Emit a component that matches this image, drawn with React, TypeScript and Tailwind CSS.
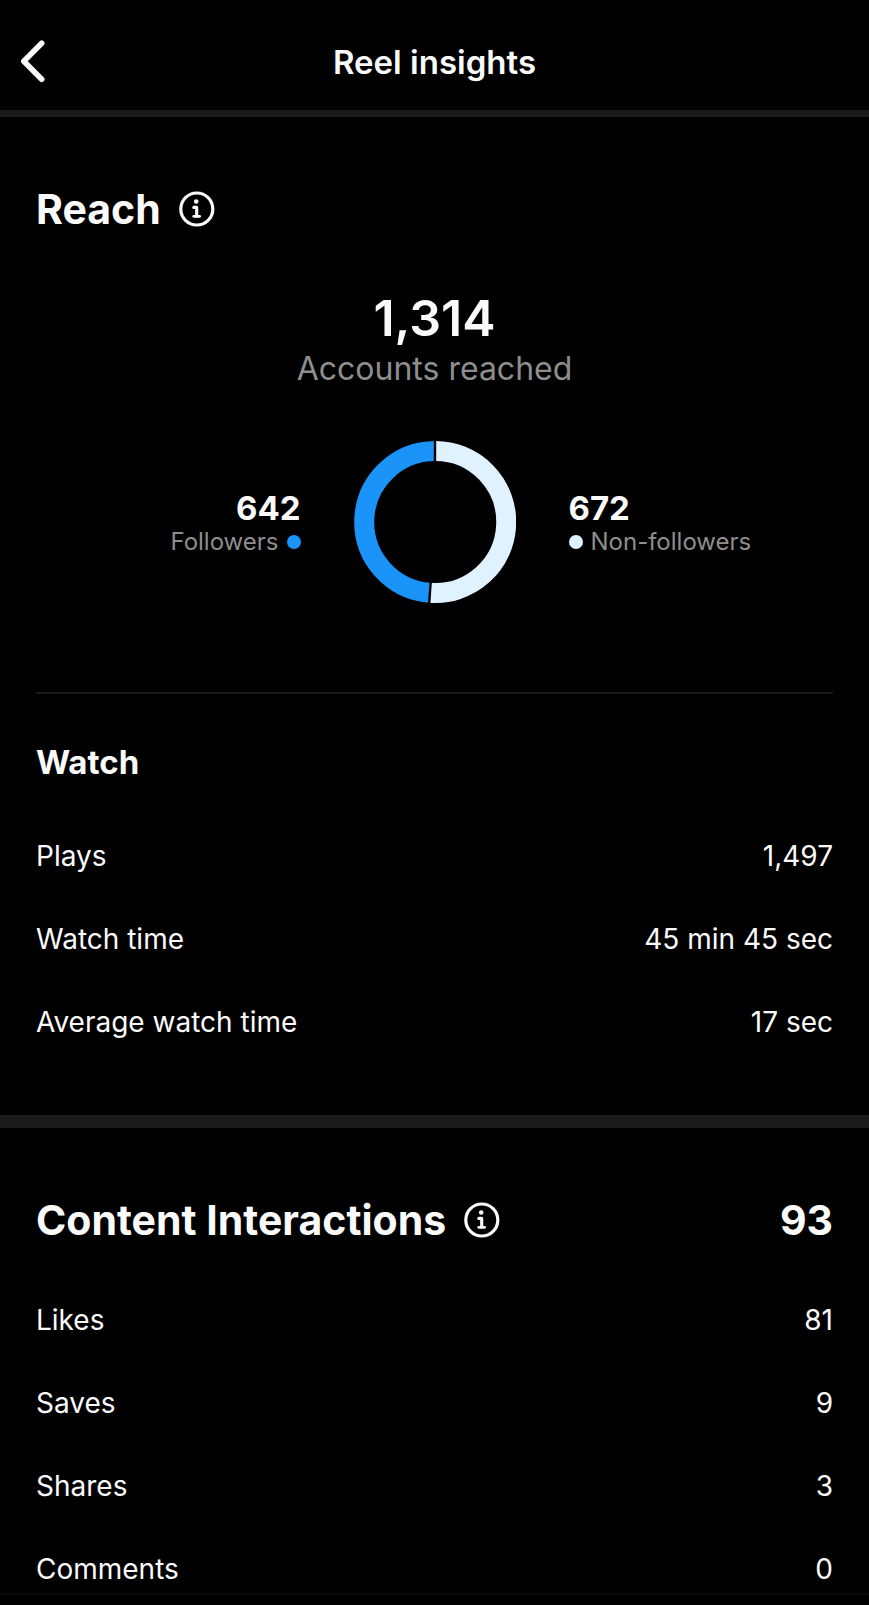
import React from "react";

type Metric = { label: string; value: string };

const watchMetrics: Metric[] = [
  { label: "Plays", value: "1,497" },
  { label: "Watch time", value: "45 min 45 sec" },
  { label: "Average watch time", value: "17 sec" },
];

const interactionMetrics: Metric[] = [
  { label: "Likes", value: "81" },
  { label: "Saves", value: "9" },
  { label: "Shares", value: "3" },
  { label: "Comments", value: "0" },
];

function InfoButton({ label }: { label: string }) {
  return (
    <button type="button" aria-label={label} className="shrink-0">
      <svg viewBox="0 0 36 36" className="size-9" fill="none" stroke="currentColor">
        <circle cx="17.8" cy="18" r="16" strokeWidth="3.2" />
        <circle cx="17.2" cy="10.5" r="2.3" fill="currentColor" stroke="none" />
        <path d="M14.8 16.4h2.9v8.6" strokeWidth="3.1" strokeLinecap="round" strokeLinejoin="round" />
        <path d="M14.8 25.3h5.8" strokeWidth="2.8" strokeLinecap="round" />
      </svg>
    </button>
  );
}

function MetricList({ items }: { items: Metric[] }) {
  return (
    <dl className="flex flex-col gap-[47px] text-[28px] leading-9">
      {items.map((item) => (
        <div key={item.label} className="flex justify-between">
          <dt>{item.label}</dt>
          <dd>{item.value}</dd>
        </div>
      ))}
    </dl>
  );
}

function ReachDonut() {
  return (
    <svg viewBox="-81 -81 162 162" className="size-[162px] shrink-0" fill="none" role="img" aria-label="642 followers, 672 non-followers">
      <path d="M0 -71A71 71 0 1 1 -5.1 70.8" stroke="#e0f1ff" strokeWidth="20" />
      <path d="M-5.1 70.8A71 71 0 0 1 0 -71" stroke="#1a94f8" strokeWidth="20" />
      <path d="M0 -81V-60M-4.3 59.8L-5.8 81" stroke="#000" strokeWidth="2.4" />
    </svg>
  );
}

export default function App() {
  return (
    <div className="min-h-screen bg-black font-['Inter',sans-serif] text-[#fafafa]">
      <header className="grid grid-cols-[1fr_auto_1fr] items-center border-b-[7px] border-[#1a1a1a] pt-[37px] pb-[23px]">
        <button type="button" aria-label="Back" className="ml-5 w-7">
          <svg viewBox="0 0 28 48" className="h-12 w-7" fill="none" stroke="currentColor" strokeWidth="5.6" strokeLinecap="round" strokeLinejoin="round">
            <path d="M21.7 5.2L3.8 23.2L21.7 41.2" />
          </svg>
        </button>
        <h1 className="text-[33px] leading-[50px] font-semibold">Reel insights</h1>
      </header>

      <main>
        <section className="border-b-[13px] border-[#1a1a1a] px-9 pt-[68px] pb-[75px]">
          <div className="flex items-center gap-[18px]">
            <h2 className="text-[41px] leading-[48px] font-bold">Reach</h2>
            <InfoButton label="About reach" />
          </div>

          <div className="mt-[54px] text-center">
            <p className="text-[50px] leading-[62px] font-semibold">1,314</p>
            <p className="text-[32px] leading-10 text-[#8e8e8e]">Accounts reached</p>
          </div>

          <div className="mt-[52px] grid grid-cols-[1fr_auto_1fr] items-center gap-[53px]">
            <div className="flex flex-col items-end pt-1">
              <span className="text-[33px] leading-9 font-bold">642</span>
              <span className="flex items-center gap-2 text-2xl text-[#8e8e8e]">
                Followers
                <span className="size-3.5 rounded-full bg-[#1a94f8]" />
              </span>
            </div>
            <ReachDonut />
            <div className="flex flex-col items-start pt-1">
              <span className="text-[33px] leading-9 font-bold">672</span>
              <span className="flex items-center gap-2 text-2xl text-[#8e8e8e]">
                <span className="size-3.5 rounded-full bg-[#e0f1ff]" />
                Non-followers
              </span>
            </div>
          </div>

          <hr className="mt-[89px] border-t-2 border-[#1a1a1a]" />

          <h3 className="mt-12 mb-14 text-[33px] leading-10 font-bold">Watch</h3>
          <MetricList items={watchMetrics} />
        </section>

        <section className="border-b-2 border-[#0c0c0c] px-9 pt-[68px] pb-1.5">
          <div className="mb-[58px] flex items-center gap-[18px]">
            <h2 className="text-[41px] leading-[48px] font-bold">Content Interactions</h2>
            <InfoButton label="About content interactions" />
            <span className="ml-auto text-[41px] leading-[48px] font-bold">93</span>
          </div>
          <MetricList items={interactionMetrics} />
        </section>
      </main>
    </div>
  );
}
